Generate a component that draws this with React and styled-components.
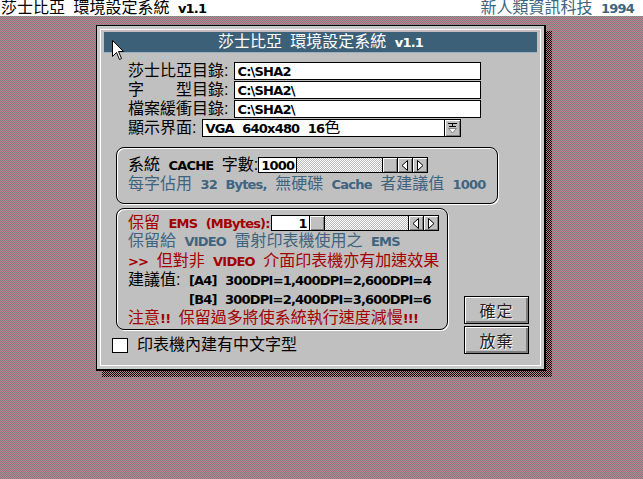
import React from "react";
import styled, { createGlobalStyle } from "styled-components";

const checker = (a, b) =>
  `repeating-conic-gradient(${a} 0 25%, ${b} 0 50%) 0 0 / 2px 2px`;

const FONT = `"Liberation Sans", "Noto Sans CJK TC", sans-serif`;
const BLUE = "#3f6480";
const RED = "#a40000";

const GlobalStyle = createGlobalStyle`
  html, body { margin: 0; padding: 0; }
  body { font-family: ${FONT}; font-size: 16px; }
`;

const Screen = styled.div`
  width: 643px;
  height: 479px;
  overflow: hidden;
  background: ${checker("#c08090", "#808080")};
  display: flex;
  flex-direction: column;
`;

const TopBar = styled.div`
  height: 16px;
  background: #fff;
  display: flex;
  justify-content: space-between;
  align-items: center;
  padding: 0 9px 0 1px;
  line-height: 16px;
  word-spacing: 4px;
  white-space: nowrap;
`;

const Brand = styled.span`
  color: ${BLUE};
`;

// bitmap-ish latin: bold, a touch condensed
const L = styled.b`
  font-family: "DejaVu Sans", sans-serif;
  font-size: 13px;
  font-weight: bold;
  letter-spacing: -0.8px;
  word-spacing: 0;
`;

const Desktop = styled.div`
  position: relative;
  z-index: 0;
  flex: 1;
  padding: 9px 0 0 96px;
`;

const Window = styled.div`
  position: relative;
  box-sizing: border-box;
  width: 450px;
  height: 346px;
  border: 1px solid #000;
  border-right-width: 2px;
  border-bottom-width: 2px;
  background: #cacaca;
  display: flex;

  &::after {
    content: "";
    position: absolute;
    left: 5px;
    top: 5px;
    right: -8px;
    bottom: -8px;
    z-index: -1;
    background: ${checker("#000", "#c08090")};
  }
`;

const Frame = styled.div`
  flex: 1;
  margin: 3px;
  border: 1px solid #fff;
  background: #c0c0c0;
  padding: 2px 3px;
  display: flex;
  flex-direction: column;
`;

const TitleBar = styled.div`
  height: 21px;
  background: #3c6078;
  border-bottom: 1px solid #9ab0bf;
  box-sizing: border-box;
  color: #fff;
  text-align: center;
  line-height: 20px;
  word-spacing: 4px;
  white-space: nowrap;
`;

const Body = styled.div`
  padding: 9px 0 0 8px;
  display: flex;
  flex-direction: column;
`;

const Fields = styled.div`
  display: flex;
  flex-direction: column;
  gap: 1px;
  padding-left: 16px;
`;

const FieldRow = styled.div`
  display: flex;
  align-items: center;
  gap: 6px;
  height: 18px;
  white-space: nowrap;
`;

const Label = styled.span`
  line-height: 18px;
`;

const TextBox = styled.div`
  box-sizing: border-box;
  width: ${(p) => p.$w}px;
  height: ${(p) => p.$h || 18}px;
  border: 1px solid #000;
  background: #fff;
  padding: 0 2px;
  line-height: ${(p) => (p.$h || 18) - 2}px;
  text-align: ${(p) => (p.$right ? "right" : "left")};
  white-space: nowrap;
  word-spacing: 4px;
  overflow: hidden;
`;

const Combo = styled.div`
  display: flex;
`;

const DropButton = styled.div`
  box-sizing: border-box;
  width: 17px;
  height: 18px;
  margin-left: -1px;
  border: 1px solid #000;
  background: #c0c0c0;
  box-shadow: inset 1px 1px 0 #fff, inset -1px -1px 0 #808080;
  display: flex;
  align-items: center;
  justify-content: center;
`;

const Group = styled.div`
  box-sizing: border-box;
  width: ${(p) => p.$w}px;
  height: ${(p) => p.$h}px;
  margin: ${(p) => p.$m || "0"};
  border: 1px solid #000;
  border-radius: 8px;
  box-shadow: 1px 1px 0 #fff, inset 1px 1px 0 #fff;
  padding: ${(p) => p.$pad};
`;

const Line = styled.div`
  height: ${(p) => p.$h || 19}px;
  line-height: ${(p) => p.$h || 19}px;
  white-space: nowrap;
  word-spacing: 4px;
  padding-left: ${(p) => p.$indent || 0}px;
  color: ${(p) => (p.$tone === "red" ? RED : p.$tone === "blue" ? BLUE : "#000")};
`;

const Scroller = styled.span`
  display: inline-flex;
  vertical-align: top;
  height: 16px;
  margin-left: ${(p) => p.$gap || 0}px;
  color: #000;
`;

const Track = styled.div`
  box-sizing: border-box;
  width: ${(p) => p.$w}px;
  height: 16px;
  margin-left: -1px;
  border: 1px solid #000;
  background: ${checker("#fff", "#b8b8b8")};
`;

const Knob = styled.div`
  box-sizing: border-box;
  width: ${(p) => p.$w || 16}px;
  height: 16px;
  margin-left: -1px;
  border: 1px solid #000;
  background: #c0c0c0;
  box-shadow: inset 1px 1px 0 #fff, inset -1px -1px 0 #808080;
  display: flex;
  align-items: center;
  justify-content: center;
`;

const Bottom = styled.div`
  display: grid;
  grid-template-columns: 336px 65px;
  column-gap: 16px;
  margin-top: 4px;
`;

const CheckRow = styled.label`
  grid-column: 1;
  display: flex;
  align-items: center;
  gap: 9px;
  height: 16px;
  margin-top: 7px;
  line-height: 16px;
`;

const Box = styled.span`
  box-sizing: border-box;
  width: 16px;
  height: 15px;
  border: 1px solid #000;
  background: #fff;
`;

const Buttons = styled.div`
  grid-column: 2;
  grid-row: 1 / span 2;
  align-self: end;
  display: flex;
  flex-direction: column;
  gap: 2px;
  margin-bottom: -1px;
`;

const PushButton = styled.div`
  box-sizing: border-box;
  height: 28px;
  border: 1px solid #000;
  background: #c0c0c0;
  box-shadow: inset 1px 1px 0 #fff, inset -2px -2px 0 #808080;
  display: flex;
  align-items: center;
  justify-content: center;
  color: #222;
  text-shadow: 1px 1px 0 #fff;
  letter-spacing: 1px;
`;

const Cursor = styled.svg`
  position: absolute;
  left: 15px;
  top: 14px;
`;

const Arrow = ({ dir }) => (
  <svg width="8" height="11" viewBox="0 0 8 11">
    {dir === "left" ? (
      <polygon points="6.5,0.5 6.5,10.5 1,5.5" fill="#fff" stroke="#000" />
    ) : (
      <polygon points="1.5,0.5 1.5,10.5 7,5.5" fill="#fff" stroke="#000" />
    )}
  </svg>
);

const DropIcon = () => (
  <svg width="11" height="12" viewBox="0 0 11 12">
    <line x1="1" y1="1.5" x2="10" y2="1.5" stroke="#000" />
    <line x1="5.5" y1="1.5" x2="5.5" y2="4" stroke="#000" />
    <line x1="2" y1="4.5" x2="9" y2="4.5" stroke="#000" />
    <polygon points="1.5,6.5 9.5,6.5 5.5,11" fill="#fff" stroke="#808080" />
  </svg>
);

export default function App() {
  return (
    <>
      <GlobalStyle />
      <Screen>
        <TopBar>
          <span>
            莎士比亞 環境設定系統 <L>v1.1</L>
          </span>
          <Brand>
            新人類資訊科技 <L>1994</L>
          </Brand>
        </TopBar>
        <Desktop>
          <Window>
            <Frame>
              <TitleBar>
                莎士比亞 環境設定系統 <L>v1.1</L>
              </TitleBar>
              <Body>
                <Fields>
                  <FieldRow>
                    <Label>莎士比亞目錄:</Label>
                    <TextBox $w={247}>
                      <L>C:\SHA2</L>
                    </TextBox>
                  </FieldRow>
                  <FieldRow>
                    <Label>字　　型目錄:</Label>
                    <TextBox $w={247}>
                      <L>C:\SHA2\</L>
                    </TextBox>
                  </FieldRow>
                  <FieldRow>
                    <Label>檔案緩衝目錄:</Label>
                    <TextBox $w={247}>
                      <L>C:\SHA2\</L>
                    </TextBox>
                  </FieldRow>
                  <FieldRow>
                    <Label>顯示界面:</Label>
                    <Combo>
                      <TextBox $w={243}>
                        <L>VGA</L> <L>640x480</L> <L>16</L>色
                      </TextBox>
                      <DropButton>
                        <DropIcon />
                      </DropButton>
                    </Combo>
                  </FieldRow>
                </Fields>

                <Group $w={382} $h={57} $m="10px 0 0 4px" $pad="9px 0 0 11px">
                  <Line $h={16}>
                    系統 <L>CACHE</L> 字數:
                    <Scroller>
                      <TextBox $w={39} $h={16}>
                        <L>1000</L>
                      </TextBox>
                      <Track $w={87} />
                      <Knob />
                      <Knob>
                        <Arrow dir="left" />
                      </Knob>
                      <Knob>
                        <Arrow dir="right" />
                      </Knob>
                    </Scroller>
                  </Line>
                  <Line $tone="blue" $h={22}>
                    每字佔用 <L>32</L> <L>Bytes,</L> 無硬碟 <L>Cache</L> 者建議值 <L>1000</L>
                  </Line>
                </Group>

                <Bottom>
                  <Group $w={332} $h={122} $m="0 0 0 4px" $pad="6px 0 0 11px">
                    <Line $tone="red" $h={16}>
                      保留 <L>EMS</L> <L>(MBytes):</L>
                      <Scroller $gap={1}>
                        <TextBox $w={39} $h={16} $right>
                          <L>1</L>
                        </TextBox>
                        <Knob />
                        <Track $w={85} />
                        <Knob>
                          <Arrow dir="left" />
                        </Knob>
                        <Knob>
                          <Arrow dir="right" />
                        </Knob>
                      </Scroller>
                    </Line>
                    <Line $tone="blue" $h={20}>
                      保留給 <L>VIDEO</L> 雷射印表機使用之 <L>EMS</L>
                    </Line>
                    <Line $tone="red">
                      <L>&gt;&gt;</L> 但對非 <L>VIDEO</L> 介面印表機亦有加速效果
                    </Line>
                    <Line>
                      建議值: <L>[A4]</L> <L>300DPI=1,400DPI=2,600DPI=4</L>
                    </Line>
                    <Line $indent={61}>
                      <L>[B4]</L> <L>300DPI=2,400DPI=3,600DPI=6</L>
                    </Line>
                    <Line $tone="red">
                      注意<L>!!</L> 保留過多將使系統執行速度減慢<L>!!!</L>
                    </Line>
                  </Group>
                  <CheckRow>
                    <Box />
                    印表機內建有中文字型
                  </CheckRow>
                  <Buttons>
                    <PushButton>確定</PushButton>
                    <PushButton>放棄</PushButton>
                  </Buttons>
                </Bottom>
              </Body>
            </Frame>
            <Cursor width="13" height="21" viewBox="0 0 13 21">
              <path
                d="M0.5 0.5 L0.5 16.5 L4.5 12.5 L7.5 19.5 L9.5 18.5 L6.5 11.5 L11.5 11.5 Z"
                fill="#fff"
                stroke="#000"
              />
            </Cursor>
          </Window>
        </Desktop>
      </Screen>
    </>
  );
}
